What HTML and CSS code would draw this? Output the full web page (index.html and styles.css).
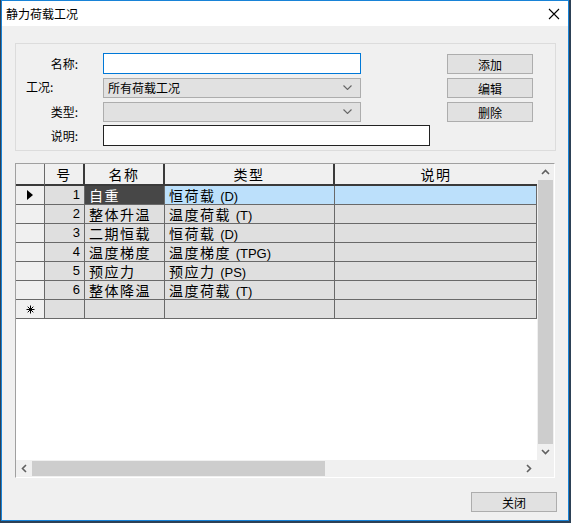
FILE: index.html
```html
<!DOCTYPE html>
<html>
<head>
<meta charset="utf-8">
<link rel="stylesheet" href="styles.css">
</head>
<body>
<div class="window">
  <div class="titlebar">
    <span class="title">静力荷载工况</span>
    <svg class="close" width="12" height="12" viewBox="0 0 12 12"><path d="M1 1 L11 11 M11 1 L1 11" stroke="#000" stroke-width="1.1" fill="none"/></svg>
  </div>
  <div class="client">
    <div class="groupbox">
      <div class="form">
        <div class="row"><span class="lbl">名称:</span><div class="field focus"></div></div>
        <div class="row"><span class="lbl lbl-left">工况:</span><div class="field combo"><span>所有荷载工况</span><svg class="chev" width="9" height="5" viewBox="0 0 9 5"><path d="M0.5 0.5 L4.5 4.5 L8.5 0.5" stroke="#666" stroke-width="1.1" fill="none"/></svg></div></div>
        <div class="row"><span class="lbl">类型:</span><div class="field combo"><span></span><svg class="chev" width="9" height="5" viewBox="0 0 9 5"><path d="M0.5 0.5 L4.5 4.5 L8.5 0.5" stroke="#666" stroke-width="1.1" fill="none"/></svg></div></div>
        <div class="row"><span class="lbl">说明:</span><div class="field desc"></div></div>
      </div>
      <div class="buttons">
        <div class="btn">添加</div>
        <div class="btn">编辑</div>
        <div class="btn">删除</div>
      </div>
    </div>

    <div class="grid">
      <div class="table">
        <div class="tr head">
          <div class="c rh"></div>
          <div class="c c1">号</div>
          <div class="c c2">名称</div>
          <div class="c c3">类型</div>
          <div class="c c4">说明</div>
        </div>
        <div class="tr">
          <div class="c rh"><svg width="6" height="10" viewBox="0 0 6 10"><path d="M0 0 L6 5 L0 10 Z" fill="#000"/></svg></div>
          <div class="c c1 num">1</div>
          <div class="c c2 cur">自重</div>
          <div class="c c3 sel">恒荷载 <span class="lat">(D)</span></div>
          <div class="c c4 sel"></div>
        </div>
        <div class="tr">
          <div class="c rh"></div>
          <div class="c c1 num">2</div>
          <div class="c c2">整体升温</div>
          <div class="c c3">温度荷载 <span class="lat">(T)</span></div>
          <div class="c c4"></div>
        </div>
        <div class="tr">
          <div class="c rh"></div>
          <div class="c c1 num">3</div>
          <div class="c c2">二期恒载</div>
          <div class="c c3">恒荷载 <span class="lat">(D)</span></div>
          <div class="c c4"></div>
        </div>
        <div class="tr">
          <div class="c rh"></div>
          <div class="c c1 num">4</div>
          <div class="c c2">温度梯度</div>
          <div class="c c3">温度梯度 <span class="lat">(TPG)</span></div>
          <div class="c c4"></div>
        </div>
        <div class="tr">
          <div class="c rh"></div>
          <div class="c c1 num">5</div>
          <div class="c c2">预应力</div>
          <div class="c c3">预应力 <span class="lat">(PS)</span></div>
          <div class="c c4"></div>
        </div>
        <div class="tr">
          <div class="c rh"></div>
          <div class="c c1 num">6</div>
          <div class="c c2">整体降温</div>
          <div class="c c3">温度荷载 <span class="lat">(T)</span></div>
          <div class="c c4"></div>
        </div>
        <div class="tr">
          <div class="c rh"><svg width="9" height="9" viewBox="0 0 9 9"><path d="M4.5 0.5 V8.5 M0.5 4.5 H8.5 M1.7 1.7 L7.3 7.3 M7.3 1.7 L1.7 7.3" stroke="#000" stroke-width="1" fill="none"/></svg></div>
          <div class="c c1"></div>
          <div class="c c2"></div>
          <div class="c c3"></div>
          <div class="c c4"></div>
        </div>
      </div>
      <div class="vscroll">
        <div class="arrow"><svg width="9" height="6" viewBox="0 0 9 6"><path d="M1 5 L4.5 1.5 L8 5" stroke="#606060" stroke-width="1.6" fill="none"/></svg></div>
        <div class="vthumb"></div>
        <div class="arrow"><svg width="9" height="6" viewBox="0 0 9 6"><path d="M1 1 L4.5 4.5 L8 1" stroke="#606060" stroke-width="1.6" fill="none"/></svg></div>
      </div>
      <div class="hscroll">
        <div class="harrow"><svg width="6" height="9" viewBox="0 0 6 9"><path d="M5 1 L1.5 4.5 L5 8" stroke="#606060" stroke-width="1.6" fill="none"/></svg></div>
        <div class="hthumb"></div>
        <div class="htrack"></div>
        <div class="harrow"><svg width="6" height="9" viewBox="0 0 6 9"><path d="M1 1 L4.5 4.5 L1 8" stroke="#606060" stroke-width="1.6" fill="none"/></svg></div>
      </div>
      <div class="corner"></div>
    </div>

    <div class="footer">
      <div class="btn close-btn">关闭</div>
    </div>
  </div>
</div>
</body>
</html>
```

FILE: styles.css
```css
html, body {
  margin: 0;
  padding: 0;
  background: #2d4156;
  width: 571px;
  height: 523px;
  overflow: hidden;
}

body {
  font-family: "Liberation Sans", "Noto Sans CJK SC", sans-serif;
  font-size: 12px;
  color: #000;
}

.window {
  margin-left: 1px;
  width: 568px;
  height: 521px;
  box-sizing: border-box;
  border: 1px solid #1883d7;
  background: #f0f0f0;
  display: flex;
  flex-direction: column;
}

.titlebar {
  height: 25px;
  background: #fff;
  display: flex;
  align-items: center;
  justify-content: space-between;
  padding: 0 8px 0 4px;
  flex: none;
}

.title {
  font-family: "Noto Sans CJK SC", sans-serif;
  font-size: 12px;
  line-height: 25px;
}

.close {
  display: block;
  margin-top: 1px;
}

.client {
  flex: 1;
  background: #f0f0f0;
  display: flex;
  flex-direction: column;
}

.groupbox {
  margin: 17px 0 0 13px;
  width: 541px;
  height: 108px;
  box-sizing: border-box;
  border: 1px solid #dcdcdc;
  padding: 9px 22px 0 0;
  display: flex;
}

.form {
  display: flex;
  flex-direction: column;
  gap: 3px;
}

.row {
  display: flex;
  align-items: center;
  height: 21px;
}

.lbl {
  width: 87px;
  box-sizing: border-box;
  padding-right: 25px;
  text-align: right;
  font-family: "Noto Sans CJK SC", sans-serif;
  font-size: 12px;
  line-height: 21px;
}

.lbl-left {
  text-align: left;
  padding-left: 10px;
  padding-right: 0;
  margin-top: -2px;
}

.field {
  width: 258px;
  height: 21px;
  box-sizing: border-box;
  background: #fff;
  border: 1px solid #7a7a7a;
}

.field.focus {
  border-color: #0078d7;
}

.field.combo {
  height: 20px;
  background: #e1e1e1;
  border-color: #adadad;
  display: flex;
  align-items: center;
  justify-content: space-between;
  padding: 0 8px 0 4px;
  font-family: "Noto Sans CJK SC", sans-serif;
  font-size: 12px;
}

.chev {
  display: block;
}

.field.desc {
  width: 327px;
  border-color: #222;
}

.buttons {
  margin-left: auto;
  margin-top: 1px;
  display: flex;
  flex-direction: column;
  gap: 4px;
}

.btn {
  width: 86px;
  height: 20px;
  box-sizing: border-box;
  background: #e1e1e1;
  border: 1px solid #adadad;
  display: flex;
  align-items: center;
  justify-content: center;
  font-family: "Noto Sans CJK SC", sans-serif;
  font-size: 12px;
}

/* grid */
.grid {
  margin: 12px 0 0 13px;
  width: 540px;
  height: 315px;
  box-sizing: border-box;
  border: 1px solid;
  border-color: #a0a0a0 #ffffff #ffffff #a0a0a0;
  background: #fff;
  display: grid;
  grid-template-columns: 521px 17px;
  grid-template-rows: 296px 17px;
}

.table {
  background: #fff;
}

.tr {
  display: flex;
  height: 19px;
}

.tr.head {
  height: 22px;
}

.c {
  box-sizing: border-box;
  border-right: 1px solid #696969;
  border-bottom: 1px solid #696969;
  background: #dfdfdf;
  font-family: "Noto Sans CJK SC", sans-serif;
  font-size: 14px;
  letter-spacing: 1.5px;
  line-height: 18px;
  padding-left: 4px;
  white-space: nowrap;
}

.lat {
  font-family: "Liberation Sans", sans-serif;
  font-size: 13px;
  letter-spacing: 0;
}

.rh { width: 29px; background: #f0f0f0; padding: 0; display: flex; align-items: center; justify-content: center; }
.c1 { width: 40px; }
.c2 { width: 80px; }
.c3 { width: 170px; }
.c4 { width: 202px; }

.head .c {
  background: #f0f0f0;
  border-right: 2px solid #3a3a3a;
  border-bottom: 2px solid #3a3a3a;
  text-align: center;
  padding-left: 0;
  line-height: 20px;
}

.head .c.rh {
  border-right: 1px solid #696969;
}

.head .c4 {
  border-right: none;
}

.num {
  text-align: right;
  padding-left: 0;
  padding-right: 4px;
  font-family: "Liberation Sans", sans-serif;
  font-size: 13px;
  letter-spacing: 0;
}

.cur {
  background: #474747;
  color: #fff;
}

.sel {
  background: #bce0fb;
}

.vscroll {
  background: #f0f0f0;
  display: flex;
  flex-direction: column;
}

.arrow {
  height: 16px;
  display: flex;
  align-items: center;
  justify-content: center;
  flex: none;
}

.vthumb {
  flex: 1;
  margin: 0 1px;
  background: #cdcdcd;
}

.hscroll {
  background: #f0f0f0;
  display: flex;
}

.harrow {
  width: 16px;
  display: flex;
  align-items: center;
  justify-content: center;
  flex: none;
}

.hthumb {
  width: 293px;
  margin: 1px 0;
  background: #cdcdcd;
}

.htrack {
  flex: 1;
}

.corner {
  background: #f0f0f0;
}

.footer {
  display: flex;
  justify-content: flex-end;
  padding: 14px 11px 0 0;
}
```
